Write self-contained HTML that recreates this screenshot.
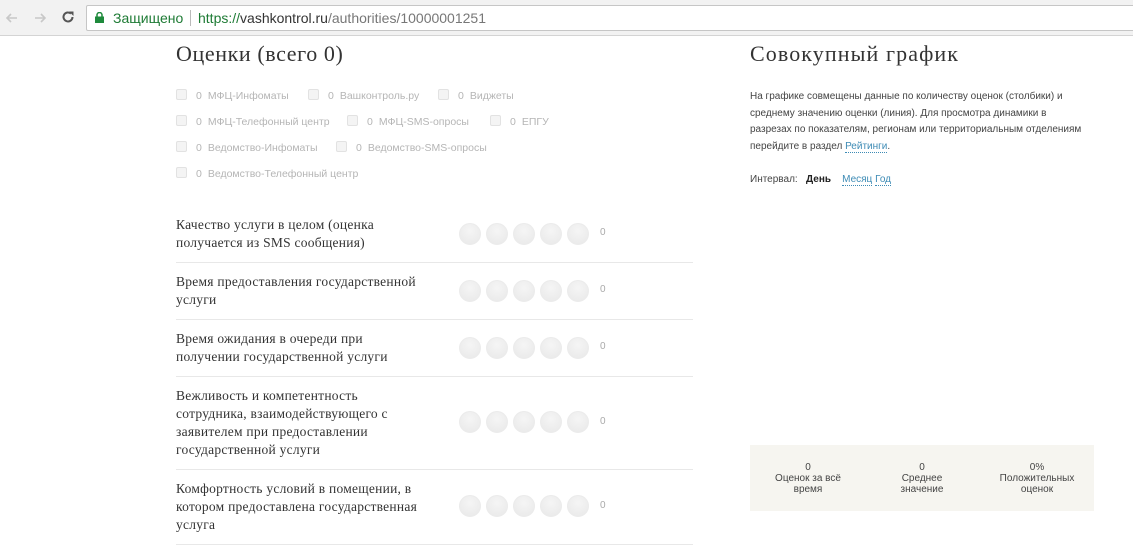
<!DOCTYPE html>
<html><head><meta charset="utf-8"><style>
*{margin:0;padding:0;box-sizing:border-box}
body{width:1133px;height:546px;overflow:hidden;background:#fff;position:relative;font-family:"Liberation Sans","DejaVu Sans",sans-serif}
.bar{position:absolute;left:0;top:0;width:1133px;height:36px;background:#f2f2f2;border-bottom:1px solid #d4d4d4}
.url{position:absolute;left:86px;top:5px;width:1060px;height:26px;background:#fff;border:1px solid #c6c6c6;border-radius:2px;font-size:14px;line-height:24px}
.abs{position:absolute}
.serif{font-family:"Liberation Serif","DejaVu Serif",serif}
.cb{position:absolute;font-size:10.5px;color:#b5b5b5;white-space:nowrap}
.cb i{display:inline-block;width:11px;height:11px;border:1px solid #e2e2e2;background:#f4f4f4;border-radius:2px;vertical-align:-1px;margin-right:9px}
.cb b{font-weight:normal;margin-right:6px}
.row{position:absolute;left:176px;width:517px;border-bottom:1px solid #e8e8e8}
.row .t{position:absolute;left:0;font-family:"Liberation Serif","DejaVu Serif",serif;font-size:13.5px;line-height:18px;color:#333;width:290px;white-space:nowrap;letter-spacing:.25px}
.row .c{position:absolute;left:283px;width:140px;height:22px}
.row .c span{display:inline-block;width:22px;height:22px;border-radius:50%;background:radial-gradient(circle at 50% 35%,#f5f5f5,#e8e8e8);margin-right:5px;border:1px solid #ebebeb}
.row .n{position:absolute;left:424px;font-size:10px;color:#aaa}
.st{position:absolute;top:462px;width:100px;text-align:center;font-size:10px;line-height:11px;color:#444}
</style></head><body>
<div class="bar">
 <svg class="abs" style="left:4px;top:10px" width="16" height="16"><path d="M13 8H3M7 4L3 8l4 4" stroke="#c8c8c8" stroke-width="1.6" fill="none"/></svg>
 <svg class="abs" style="left:32px;top:10px" width="16" height="16"><path d="M3 8h10M9 4l4 4-4 4" stroke="#c8c8c8" stroke-width="1.6" fill="none"/></svg>
 <svg class="abs" style="left:60px;top:9px" width="16" height="16"><path d="M12.5 8A4.5 4.5 0 1 1 11 4.6" stroke="#555" stroke-width="2" fill="none"/><path d="M9 2.5h4.5V7z" fill="#555"/></svg>
 <div class="url">
  <svg class="abs" style="left:8px;top:6px" width="9" height="11"><rect x="0" y="4.5" width="9" height="6.5" fill="#1e8a3c"/><path d="M2 5V3a2.5 2.5 0 0 1 5 0v2" stroke="#1e8a3c" stroke-width="1.5" fill="none"/></svg>
  <span class="abs" style="left:26px;color:#1e7b35">Защищено</span>
  <span class="abs" style="left:103px;top:4px;width:1px;height:16px;background:#bbb"></span>
  <span class="abs" style="left:111px;color:#1e7b35">https://<span style="color:#333">vashkontrol.ru</span><span style="color:#777">/authorities/10000001251</span></span>
 </div>
</div>
<div class="abs serif" style="left:176px;top:41px;font-size:22px;color:#333;letter-spacing:.6px">Оценки (всего 0)</div>
<div class="cb" style="left:176px;top:89px"><i></i><b>0</b>МФЦ-Инфоматы</div>
<div class="cb" style="left:308px;top:89px"><i></i><b>0</b>Вашконтроль.ру</div>
<div class="cb" style="left:438px;top:89px"><i></i><b>0</b>Виджеты</div>
<div class="cb" style="left:176px;top:115px"><i></i><b>0</b>МФЦ-Телефонный центр</div>
<div class="cb" style="left:347px;top:115px"><i></i><b>0</b>МФЦ-SMS-опросы</div>
<div class="cb" style="left:490px;top:115px"><i></i><b>0</b>ЕПГУ</div>
<div class="cb" style="left:176px;top:141px"><i></i><b>0</b>Ведомство-Инфоматы</div>
<div class="cb" style="left:336px;top:141px"><i></i><b>0</b>Ведомство-SMS-опросы</div>
<div class="cb" style="left:176px;top:167px"><i></i><b>0</b>Ведомство-Телефонный центр</div>

<div class="row" style="top:205px;height:58px"><div class="t" style="top:11px">Качество услуги в целом (оценка<br>получается из SMS сообщения)</div><div class="c" style="top:18px"><span></span><span></span><span></span><span></span><span></span></div><div class="n" style="top:22px">0</div></div>
<div class="row" style="top:262px;height:58px"><div class="t" style="top:11px">Время предоставления государственной<br>услуги</div><div class="c" style="top:18px"><span></span><span></span><span></span><span></span><span></span></div><div class="n" style="top:22px">0</div></div>
<div class="row" style="top:319px;height:58px"><div class="t" style="top:11px">Время ожидания в очереди при<br>получении государственной услуги</div><div class="c" style="top:18px"><span></span><span></span><span></span><span></span><span></span></div><div class="n" style="top:22px">0</div></div>
<div class="row" style="top:376px;height:94px"><div class="t" style="top:11px">Вежливость и компетентность<br>сотрудника, взаимодействующего с<br>заявителем при предоставлении<br>государственной услуги</div><div class="c" style="top:35px"><span></span><span></span><span></span><span></span><span></span></div><div class="n" style="top:40px">0</div></div>
<div class="row" style="top:469px;height:76px"><div class="t" style="top:11px">Комфортность условий в помещении, в<br>котором предоставлена государственная<br>услуга</div><div class="c" style="top:26px"><span></span><span></span><span></span><span></span><span></span></div><div class="n" style="top:31px">0</div></div>

<div class="abs serif" style="left:750px;top:41px;font-size:22px;color:#333;letter-spacing:1.1px">Совокупный график</div>
<div class="abs" style="left:750px;top:89px;width:360px;font-size:10px;line-height:16.5px;color:#444;white-space:nowrap">На графике совмещены данные по количеству оценок (столбики) и<br>среднему значению оценки (линия). Для просмотра динамики в<br>разрезах по показателям, регионам или территориальным отделениям<br>перейдите в раздел <span style="color:#3d8bb5;border-bottom:1px dotted #3d8bb5">Рейтинги</span>.</div>
<div class="abs" style="left:750px;top:174px;font-size:10px;color:#444">Интервал:&nbsp;&nbsp; <b style="color:#222">День</b>&nbsp;&nbsp;&nbsp; <span style="color:#3d8bb5;border-bottom:1px dotted #3d8bb5">Месяц</span> <span style="color:#3d8bb5;border-bottom:1px dotted #3d8bb5">Год</span></div>
<div class="abs" style="left:750px;top:445px;width:344px;height:66px;background:#f6f5f0"></div>
<div class="st" style="left:758px">0<br>Оценок за всё<br>время</div>
<div class="st" style="left:872px">0<br>Среднее<br>значение</div>
<div class="st" style="left:987px">0%<br>Положительных<br>оценок</div>
</body></html>
